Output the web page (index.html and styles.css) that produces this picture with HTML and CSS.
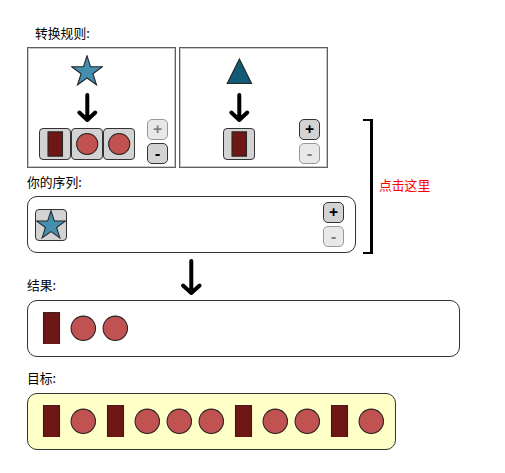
FILE: index.html
```html
<!DOCTYPE html>
<html lang="zh-CN">
<head>
<meta charset="utf-8">
<title>转换规则</title>
<link rel="stylesheet" href="styles.css">
</head>
<body>
<svg class="defs" aria-hidden="true">
  <symbol id="star" viewBox="0 0 32 32"><path class="star" d="M16 .8 19.6 11.8H31.3L21.9 18.7 25.5 29.8 16 23 6.5 29.8 10.1 18.7 .7 11.8H12.4Z"/></symbol>
  <symbol id="triangle" viewBox="0 0 32 32"><path class="triangle" d="M16.4 4 28.6 28.5H4.2Z"/></symbol>
  <symbol id="bar" viewBox="0 0 32 32"><rect class="bar" x="8.5" y="0" width="16" height="32.5"/></symbol>
  <symbol id="bar-small" viewBox="0 0 32 32"><rect class="bar" x="8.5" y="3" width="15.5" height="26"/></symbol>
  <symbol id="disc" viewBox="0 0 32 32"><circle class="disc" cx="16.3" cy="16.3" r="12.2"/></symbol>
  <symbol id="disc-small" viewBox="0 0 32 32"><circle class="disc" cx="16.2" cy="16" r="11.3"/></symbol>
</svg>
<main>
  <div class="top">
    <div class="left">
      <h2 class="rules-title">转换规则:</h2>
      <div class="rules">
        <section class="rule">
          <svg class="item"><use href="#star"/></svg>
          <svg class="arrow" width="24" height="32"><path d="M12.300 4V29M4.300 21.500 12.300 29 20.300 21.500"/></svg>
          <div class="tiles">
            <svg class="item tile"><use href="#bar-small"/></svg>
            <svg class="item tile"><use href="#disc-small"/></svg>
            <svg class="item tile"><use href="#disc-small"/></svg>
          </div>
          <div class="buttons"><button disabled>+</button><button>-</button></div>
        </section>
        <section class="rule">
          <svg class="item"><use href="#triangle"/></svg>
          <svg class="arrow" width="24" height="32"><path d="M12.300 4V29M4.300 21.500 12.300 29 20.300 21.500"/></svg>
          <div class="tiles"><svg class="item tile"><use href="#bar-small"/></svg></div>
          <div class="buttons"><button>+</button><button disabled>-</button></div>
        </section>
      </div>
      <h2 class="sequence-title">你的序列:</h2>
      <div class="box sequence">
        <svg class="item tile"><use href="#star"/></svg>
        <div class="buttons"><button>+</button><button disabled>-</button></div>
      </div>
    </div>
    <div class="callout"><div class="bracket"></div><span>点击这里</span></div>
  </div>
  <svg class="arrow down" width="24" height="42"><path d="M12.300 4V36M4 28.500 12.300 36 20.600 28.500"/></svg>
  <h2 class="result-title">结果:</h2>
  <div class="box result">
    <svg class="item"><use href="#bar"/></svg>
    <svg class="item"><use href="#disc"/></svg>
    <svg class="item"><use href="#disc"/></svg>
  </div>
  <h2 class="goal-title">目标:</h2>
  <div class="box goal">
    <svg class="item"><use href="#bar"/></svg>
    <svg class="item"><use href="#disc"/></svg>
    <svg class="item"><use href="#bar"/></svg>
    <svg class="item"><use href="#disc"/></svg>
    <svg class="item"><use href="#disc"/></svg>
    <svg class="item"><use href="#disc"/></svg>
    <svg class="item"><use href="#bar"/></svg>
    <svg class="item"><use href="#disc"/></svg>
    <svg class="item"><use href="#disc"/></svg>
    <svg class="item"><use href="#bar"/></svg>
    <svg class="item"><use href="#disc"/></svg>
  </div>
</main>
</body>
</html>
```

FILE: styles.css
```css
* { box-sizing: border-box; }
body { margin: 0; background: #fff; color: #000; font-family: "Noto Sans CJK SC", sans-serif; }
main { padding: 23px 0 0 27px; }
.defs { display: block; width: 0; height: 0; }
h2 { margin: 0; height: 20px; font-size: 12.8px; line-height: 20px; font-weight: 400; white-space: nowrap; }
.top { display: flex; }
.left { width: 329px; }
.rules-title { padding-left: 8px; margin-bottom: 4px; }
.rules { display: flex; gap: 3px; }
.rule {
  display: grid;
  grid-template-columns: 118px 1fr;
  grid-template-rows: 40px 40px 32px;
  justify-items: center;
  width: 149px;
  height: 121px;
  border: 1px solid #606060;
  outline: 1px solid #c8c8c8;
  outline-offset: -2px;
}
.rule > .item { margin-top: 7px; grid-column: 1; }
.rule > .arrow { margin-top: 3px; grid-column: 1; }
.tiles { display: flex; grid-column: 1; }
.rule .buttons { grid-column: 2; grid-row: 2 / 4; align-self: start; justify-self: start; margin: 31px 0 0 1px; }
.item { display: block; width: 32px; height: 32px; overflow: visible; }
.tile { border: 1px solid #333; border-radius: 4px; background: #d3d3d3; }
.star, .triangle, .bar, .disc { stroke: #252525; stroke-width: 1.1; }
.star { fill: #448fb0; }
.triangle { fill: #135a76; }
.bar { fill: #6d1717; }
.disc { fill: #c05252; }
.arrow { display: block; fill: none; stroke: #000; stroke-width: 4; stroke-linecap: round; stroke-linejoin: round; }
.buttons { display: grid; gap: 3px; }
button {
  width: 21px;
  height: 21px;
  padding: 0;
  border: 1px solid #333;
  border-radius: 5px;
  background: #d3d3d3;
  color: #000;
  font: bold 16px/17px "Open Sans", sans-serif;
}
button:disabled { opacity: .5; }
.sequence-title { margin: 4px 0; }
.box { display: flex; align-items: center; height: 57px; padding: 0 7px 1px; border: 1px solid #333; border-radius: 10px; }
.sequence { padding-bottom: 0; }
.sequence .buttons { margin: 0 4px 0 auto; }
.callout { display: flex; align-items: center; gap: 6px; margin: 96px 0 0 7px; height: 135px; color: #f00; font-size: 12.8px; }
.callout span { margin-bottom: 4px; }
.bracket { width: 10px; height: 135px; border: 2px solid #000; border-left: 0; border-right-width: 3px; }
.down { margin: 3px 0 0 152px; }
.result-title { margin: -24px 0 5px; }
.result { width: 433px; }
.goal-title { margin: 11px 0 5px; }
.goal { width: 369px; background: #ffffc8; }
```
